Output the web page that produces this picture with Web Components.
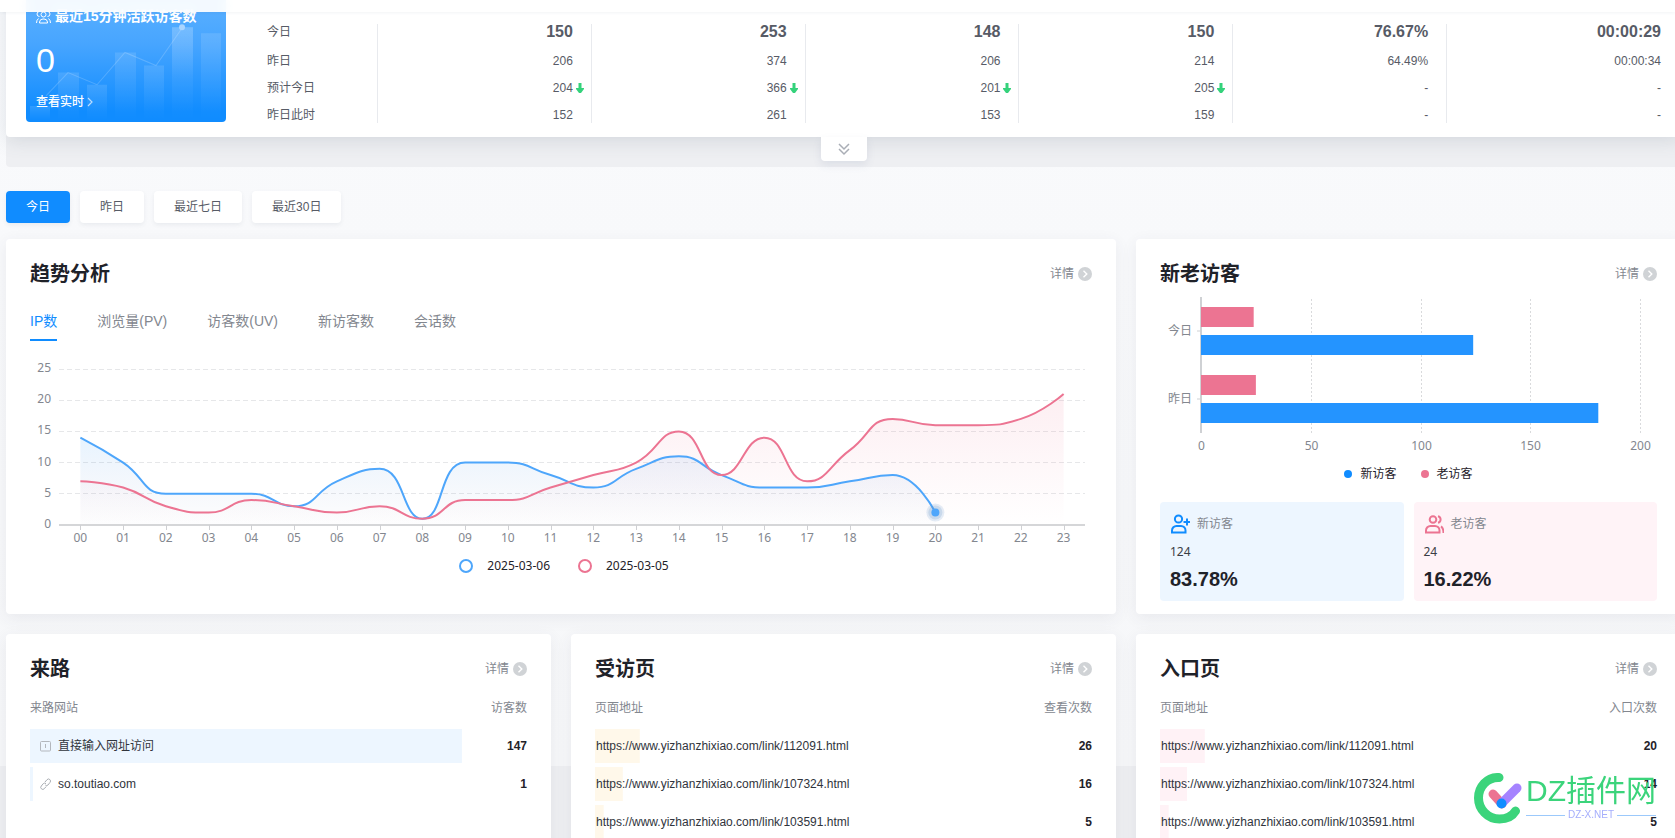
<!DOCTYPE html>
<html lang="zh-CN">
<head>
<meta charset="utf-8">
<title>网站概况</title>
<style>
  :root {
    --blue: #108cff;
    --line-blue: #4ea6fb;
    --pink: #ec7492;
    --ink: #1f2229;
    --text: #575b66;
    --muted: #83878f;
    --rule: #e8eaee;
    --sans: "Liberation Sans", "Noto Sans CJK SC", sans-serif;
    --chart: "Noto Sans", "Noto Sans CJK SC", sans-serif;
  }
  html, body { height: 100%; }
  body {
    margin: 0;
    overflow: hidden;
    color: var(--text);
    font: 12px/20px var(--sans);
    background: linear-gradient(#f9fafc 0, #f6f7f9 calc(100vh - 72px), #eeeff2 calc(100vh - 72px));
  }
</style>
</head>
<body>
<dash-page></dash-page>
<site-watermark></site-watermark>

<script>
const define = (name, html, setup) => {
  const template = document.createElement('template');
  template.innerHTML = html;
  customElements.define(name, class extends HTMLElement {
    connectedCallback() {
      if (this.shadowRoot) return;
      this.attachShadow({ mode: 'open' }).append(template.content.cloneNode(true));
      if (setup) setup(this, this.shadowRoot);
    }
  });
};

define('top-bar', `
<style>
  :host { display: block; height: 12px; position: relative; z-index: 2; background: rgba(255,255,255,.93); backdrop-filter: blur(6px); box-shadow: 0 1px 3px rgba(40,60,100,.06); }
</style>`);

/* Active visitors tile */
define('active-tile', `
<style>
  :host { display: flex; flex-direction: column; box-sizing: border-box; width: 200px; padding: 14px 10px 10px; position: relative; overflow: hidden; color: #fff; border-radius: 4px; background: linear-gradient(#55adff 15%, #47a5ff 40%, #108cff 92%); }
  .art { position: absolute; inset: 0; width: 100%; height: 100%; }
  h2, strong, a { position: relative; }
  h2 { display: flex; align-items: center; gap: 4px; margin: 0; font-size: 14px; line-height: 20px; white-space: nowrap; }
  strong { font-size: 34px; line-height: 40px; font-weight: 400; margin: 14px 0 12px; }
  a { display: flex; align-items: center; gap: 2px; color: #fff; text-decoration: none; font-weight: 500; line-height: 20px; }
</style>
<svg class="art" viewBox="0 0 200 129" preserveAspectRatio="none" aria-hidden="true">
  <defs><linearGradient id="g" x1="0" y1="0" x2="0" y2="1"><stop offset="0" stop-color="#fff" stop-opacity=".12"/><stop offset="1" stop-color="#fff" stop-opacity="0"/></linearGradient></defs>
  <g fill="url(#g)">
    <path d="M4 113h20v14H4z"/><path d="M32 80h21v47H32z"/><path d="M61 92h20v35H61z"/><path d="M89 60h21v67H89z"/><path d="M118 73h20v54h-20z"/><path d="M146 35h21v92h-21z"/><path d="M146 35h21v50h-21z"/><path d="M175 41h20v86h-20z"/>
  </g>
  <path d="M20 103 42 80 71 92 99 60 130 73 156 36" fill="none" stroke="#fff" stroke-opacity=".18"/>
  <circle cx="156" cy="35" r="3" fill="#a9d5ff"/>
</svg>
<h2><svg width="15" height="15" viewBox="0 0 15 15" fill="none" stroke="#fff" stroke-width="1" aria-hidden="true"><circle cx="7.500" cy="5.500" r="2.500"/><path d="M3.500 2.500a2.500 2.500 0 0 0 0 5M11.500 2.500a2.500 2.500 0 0 1 0 5M3.500 14v-1a3.500 3.500 0 0 1 3.500-3h1a3.500 3.500 0 0 1 3.500 3v1zM2.500 9.500Q.5 11 .5 14M12.500 9.500q2 1.500 2 4.500"/></svg>最近15分钟活跃访客数</h2>
<strong>0</strong>
<a href="#realtime">查看实时<svg width="8" height="12" viewBox="0 0 8 12" fill="none" stroke="#b9dcff" stroke-width="1.2" aria-hidden="true"><path d="M2 2l4 4-4 4"/></svg></a>`);

/* Summary figures */
define('summary-table', `
<style>
  :host { display: block; flex: 1; margin-bottom: -1px; }
  table { width: 100%; table-layout: fixed; border-collapse: separate; border-spacing: 0; }
  th, td { padding: 0 18px 11px 0; border-right: 1px solid var(--rule); font-weight: 400; line-height: 16px; text-align: right; }
  th { width: 92px; text-align: left; }
  td:last-child { padding-right: 0; border-right: 0; }
  tr:first-child > * { padding-bottom: 13px; }
  tr:first-child td { font-size: 16px; font-weight: 700; }
  tr:last-child > * { padding-bottom: 0; }
  svg { margin: 0 -11px 0 3px; vertical-align: -1px; }
</style>
<table><tbody></tbody></table>`, (host, root) => {
  const rows = [
    ['今日', '150', '253', '148', '150', '76.67%', '00:00:29'],
    ['昨日', '206', '374', '206', '214', '64.49%', '00:00:34'],
    ['预计今日', '204', '366', '201', '205', '-', '-'],
    ['昨日此时', '152', '261', '153', '159', '-', '-']
  ];
  const arrow = '<svg width="8" height="10" viewBox="0 0 8 10" aria-label="下降"><path d="M2.500 0h3v5H8v1L5 10H3L0 6V5h2.500z" fill="#34d27b"/></svg>';
  root.querySelector('tbody').innerHTML = rows.map((r, i) =>
    `<tr><th scope="row">${r[0]}</th>${r.slice(1).map(v => `<td>${v}${i === 2 && v !== '-' ? arrow : ''}</td>`).join('')}</tr>`).join('');
});

define('summary-panel', `
<style>
  :host { display: block; margin-top: -20px; background: #eeeff2; border-radius: 0 0 4px 4px; }
  .card { display: flex; gap: 41px; align-items: flex-end; padding: 0 20px 15px; background: #fff; border-radius: 4px; box-shadow: 0 4px 18px rgba(90,105,125,.17); }
  .strip { display: flex; justify-content: center; align-items: flex-start; height: 30px; }
  button { position: relative; width: 46px; height: 24px; padding: 0; border: 0; border-radius: 0 0 4px 4px; background: #fff; box-shadow: 0 4px 8px rgba(90,105,150,.12); }
  svg { display: block; margin: auto; }
</style>
<section class="card"><active-tile></active-tile><summary-table></summary-table></section>
<div class="strip"><button aria-label="展开"><svg width="12" height="14" viewBox="0 0 12 14" fill="none" stroke="#aaaeb6" stroke-width="1.500"><path d="M1 2l5 5 5-5M1 7l5 5 5-5"/></svg></button></div>`);

/* Date range buttons */
define('range-picker', `
<style>
  :host { display: flex; gap: 10px; margin: 24px 0 16px; }
  button { height: 32px; padding: 0 20px; border: 0; border-radius: 4px; background: #fff; color: var(--text); font: 12px/20px var(--sans); box-shadow: 0 2px 4px rgba(60,75,100,.08); }
  button[aria-pressed="true"] { background: var(--blue); color: #fff; }
</style>
<button aria-pressed="true">今日</button><button>昨日</button><button>最近七日</button><button>最近30日</button>`);

/* Card with a title, a details link and a slot */
define('dash-card', `
<style>
  :host { display: block; padding: 21px 24px 13px; border-radius: 4px; background: #fff; box-shadow: 0 4px 16px rgba(60,70,90,.08); }
  header { display: flex; justify-content: space-between; align-items: center; }
  h2 { margin: 0; color: var(--ink); font-size: 20px; line-height: 28px; font-weight: 700; }
  a { display: flex; align-items: center; gap: 4px; color: var(--muted); text-decoration: none; }
</style>
<header><h2></h2><a href="#details">详情<svg width="14" height="14" viewBox="0 0 14 14" aria-hidden="true"><circle cx="7" cy="7" r="7" fill="#d0d3d6"/><path d="M5.500 3.800 8.800 7l-3.300 3.200" fill="none" stroke="#fff" stroke-width="1.400"/></svg></a></header>
<slot></slot>`, (host, root) => { root.querySelector('h2').textContent = host.getAttribute('heading'); });

define('metric-tabs', `
<style>
  :host { display: flex; gap: 40px; margin-top: 19px; }
  button { padding: 0 0 4px; border: 0; border-bottom: 2px solid transparent; background: none; color: var(--muted); font: 14px/28px var(--sans); }
  button[aria-selected="true"] { color: var(--blue); border-color: var(--blue); }
</style>
<button role="tab" aria-selected="true">IP数</button><button role="tab">浏览量(PV)</button><button role="tab">访客数(UV)</button><button role="tab">新访客数</button><button role="tab">会话数</button>`,
  host => host.setAttribute('role', 'tablist'));

/* Smooth line through points; control points stay inside each segment's bounds */
const smoothPath = (pts, s = 0.5) => {
  const clamp = (v, a, b) => Math.max(Math.min(a, b), Math.min(Math.max(a, b), v));
  let out = `M${pts[0]}`, cp0 = pts[0];
  for (let i = 1; i < pts.length; i++) {
    const p = pts[i], prev = pts[i - 1], next = pts[i + 1];
    let cp1 = p, n0 = p;
    if (next) {
      const lp = Math.hypot(p[0] - prev[0], p[1] - prev[1]);
      const ln = Math.hypot(next[0] - p[0], next[1] - p[1]);
      const r = ln / (ln + lp), v = [next[0] - prev[0], next[1] - prev[1]];
      n0 = [0, 1].map(k => clamp(p[k] + v[k] * s * r, p[k], next[k]));
      cp1 = [0, 1].map(k => clamp(p[k] - (n0[k] - p[k]) * lp / ln, prev[k], p[k]));
      n0 = [0, 1].map(k => clamp(p[k] + (p[k] - cp1[k]) * ln / lp, p[k], next[k]));
    }
    out += `C${cp0} ${cp1} ${p}`;
    cp0 = n0;
  }
  return out;
};

const chartStyle = `
  :host { display: block; }
  svg { display: block; width: 100%; overflow: visible; }
  text { font: 12px var(--chart); fill: var(--muted); }
  .legend { display: flex; justify-content: center; color: var(--ink); font: 12px/20px var(--chart); }
  .legend span { display: flex; align-items: center; }`;

define('trend-chart', `
<style>${chartStyle}
  svg { height: 205px; }
  .legend { gap: 28px; margin: 10px 0 25px; padding-left: 6px; }
  .legend span { gap: 14px; }
  i { box-sizing: border-box; width: 14px; height: 14px; border: 2px solid var(--line-blue); border-radius: 50%; }
  i.old { border-color: var(--pink); }
</style>
<svg role="img" aria-label="IP数趋势"></svg>
<div class="legend"><span><i></i>2025-03-06</span><span><i class="old"></i>2025-03-05</span></div>`, (host, root) => {
  const svg = root.querySelector('svg');
  const today = [14,10,5,5,5,3,7,9,1,10,10,8,6,9,11,8,6,6,7,8,2];
  const before = [7,6,3,2,4,3,2,3,1,4,4,6,8,10,15,8,14,7,12,17,16,16,17,21];
  const draw = () => {
    const left = 29, right = svg.clientWidth - 7, step = (right - left) / 24, base = 184;
    const X = i => left + step * (i + .5), Y = v => base - v * 6.24;
    let h = `<defs>
      <linearGradient id="b" x1="0" y1="0" x2="0" y2="1"><stop offset="0" stop-color="#108cff" stop-opacity=".1"/><stop offset="1" stop-color="#5060a0" stop-opacity=".01"/></linearGradient>
      <linearGradient id="p" x1="0" y1="0" x2="0" y2="1"><stop offset="0" stop-color="#ec7492" stop-opacity=".12"/><stop offset="1" stop-color="#ec7492" stop-opacity="0"/></linearGradient></defs>`;
    for (let v = 0; v <= 25; v += 5) {
      const y = Math.floor(Y(v)) + .5;
      if (v) h += `<path d="M${left} ${y}H${right}" stroke="#e6e7e9" stroke-dasharray="5 3"/>`;
      h += `<text x="21" y="${Math.round(Y(v)) + 3}" text-anchor="end">${v}</text>`;
    }
    const area = (d, c, n) => `<path d="${smoothPath(d.map((v, i) => [X(i), Y(v)]))}L${X(n)} ${base}L${X(0)} ${base}Z" fill="url(#${c})"/>`;
    const line = (d, c) => `<path d="${smoothPath(d.map((v, i) => [X(i), Y(v)]))}" fill="none" stroke="${c}" stroke-width="2"/>`;
    h += area(before, 'p', 23) + area(today, 'b', 20) + line(today, '#4ea6fb') + line(before, '#ec7492');
    h += `<path d="M${left} ${base}H${right}" stroke="#d5d6d8" stroke-width="2"/>`;
    before.forEach((_, i) => {
      h += `<path d="M${Math.round(X(i)) + .5} ${base}v5" stroke="#cfd0d3"/><text x="${X(i)}" y="201" text-anchor="middle">${String(i).padStart(2, '0')}</text>`;
    });
    h += `<circle cx="${X(20)}" cy="${Y(2)}" r="9" fill="#5b8fc8" fill-opacity=".16"/><circle cx="${X(20)}" cy="${Y(2)}" r="7" fill="#5b8fc8" fill-opacity=".2"/><circle cx="${X(20)}" cy="${Y(2)}" r="4" fill="#4ea6fb"/>`;
    svg.innerHTML = h;
  };
  draw();
  new ResizeObserver(draw).observe(svg);
});

define('visitor-chart', `
<style>${chartStyle}
  svg { height: 171px; }
  .legend { gap: 24px; margin: 5px 0 18px; }
  .legend span { gap: 8px; }
  i { width: 8px; height: 8px; border-radius: 50%; background: var(--blue); }
  i.old { background: var(--pink); }
</style>
<svg role="img" aria-label="新老访客对比"></svg>
<div class="legend"><span><i></i>新访客</span><span><i class="old"></i>老访客</span></div>`, (host, root) => {
  const svg = root.querySelector('svg');
  const draw = () => {
    const left = 41, right = svg.clientWidth - 17, k = (right - left) / 200;
    let h = '';
    for (let v = 0; v <= 200; v += 50) {
      const x = Math.round(left + v * k) + .5;
      if (v) h += `<path d="M${x} 11V145" stroke="#d9dadc" stroke-dasharray="2 2"/>`;
      h += `<text x="${x}" y="162" text-anchor="middle">${v}</text>`;
    }
    h += `<path d="M${left} 9V145" stroke="#cfd1d4" stroke-width="2"/>`;
    [['今日', 24, 124, 9], ['昨日', 25, 181, 77]].forEach(([name, old, fresh, y]) => {
      h += `<path d="M${left - 4} ${y + 34}h4" stroke="#cfd1d4"/><text x="${left - 9}" y="${y + 38}" text-anchor="end">${name}</text>`;
      h += `<rect x="${left}" y="${y + 10}" width="${old * k}" height="20" fill="#ec7492"/><rect x="${left}" y="${y + 38}" width="${fresh * k}" height="20" fill="#2494ff"/>`;
    });
    svg.innerHTML = h;
  };
  draw();
  new ResizeObserver(draw).observe(svg);
});

define('visitor-share', `
<style>
  :host { display: block; flex: 1; box-sizing: border-box; padding: 12px 10px 10px; border-radius: 4px; background: var(--tint); }
  .name { display: flex; align-items: center; gap: 7px; color: var(--muted); }
  .count { margin: 8px 0 5px; color: #3a3d45; font-family: var(--chart); }
  strong { display: block; color: var(--ink); font-size: 20px; line-height: 24px; }
</style>
<div class="name"><slot name="icon"></slot><slot></slot></div>
<div class="count"></div><strong></strong>`, (host, root) => {
  root.querySelector('.count').textContent = host.getAttribute('count');
  root.querySelector('strong').textContent = host.getAttribute('share');
});

/* Ranking table with share bars behind the names */
define('rank-table', `
<style>
  :host { display: block; margin-top: 4px; }
  table { width: 100%; table-layout: fixed; border-collapse: separate; border-spacing: 0 4px; }
  th, td { height: 34px; padding: 0; text-align: left; }
  th { color: var(--muted); font-weight: 400; }
  th:last-child, td:last-child { width: 62px; text-align: right; }
  td { color: #30343c; }
  td:first-child { background: linear-gradient(var(--bar), var(--bar)) no-repeat 0 0 / var(--share) 100%; }
  td:last-child { color: var(--ink); font-weight: 700; }
  a { display: flex; align-items: center; gap: 7px; color: inherit; text-decoration: none; padding-left: 1px; }
  a:has(svg) { padding-left: 10px; }
</style>
<table><thead></thead><tbody></tbody></table>`, (host, root) => {
  const icons = {
    box: '<svg width="11" height="12" viewBox="0 0 11 12" fill="none" stroke="#b3b7bd" aria-hidden="true"><rect x=".5" y="1.500" width="10" height="9.500" rx="1"/><path d="M5.500 4v4"/></svg>',
    link: '<svg width="11" height="12" viewBox="0 0 11 12" fill="none" stroke="#a9adb3" aria-hidden="true"><path d="M5 4l2-2.300a2 2 0 0 1 3 2.700L8 7Q6.700 8.200 5.300 7M6.200 8.500 4.300 10.700a2 2 0 0 1-3-2.700L3.300 5.600Q4.600 4.500 6 5.600"/></svg>'
  };
  const [a, b] = host.getAttribute('columns').split(',');
  root.querySelector('thead').innerHTML = `<tr><th scope="col">${a}</th><th scope="col">${b}</th></tr>`;
  root.querySelector('tbody').innerHTML = JSON.parse(host.getAttribute('rows')).map(([name, n, share, icon]) =>
    `<tr><td style="--share:${share}%"><a href="#page">${icons[icon] || ''}<span>${name}</span></a></td><td>${n}</td></tr>`).join('');
});

define('dash-page', `
<style>
  :host { display: block; }
  main { width: 100%; margin-left: 6px; }
  .grid { display: grid; grid-template-columns: repeat(3, minmax(0, 1fr)); gap: 20px; }
  .wide { grid-column: span 2; }
  .shares { display: flex; gap: 10px; }
  .new { --tint: #edf6ff; }
  .old { --tint: #fff3f7; }
</style>
<top-bar></top-bar>
<main>
  <summary-panel></summary-panel>
  <range-picker></range-picker>
  <div class="grid">
    <dash-card class="wide" heading="趋势分析"><metric-tabs></metric-tabs><trend-chart></trend-chart></dash-card>
    <dash-card heading="新老访客">
      <visitor-chart></visitor-chart>
      <div class="shares">
        <visitor-share class="new" count="124" share="83.78%"><svg slot="icon" width="20" height="20" viewBox="0 0 20 20" fill="none" stroke="#108cff" stroke-width="2" aria-hidden="true"><circle cx="8.500" cy="5" r="3.600"/><path d="M2 18.500v-2a4.500 4.500 0 0 1 4.500-4.500h4.500a4.500 4.500 0 0 1 4.500 4.500v2zM17 4.500v7M13.500 8h6.500"/></svg>新访客</visitor-share>
        <visitor-share class="old" count="24" share="16.22%"><svg slot="icon" width="20" height="20" viewBox="0 0 20 20" fill="none" stroke="#ec7492" stroke-width="2" aria-hidden="true"><circle cx="9" cy="5.500" r="3.300"/><path d="M2 18.500v-2a4.500 4.500 0 0 1 4.500-4.500h4.500a4.500 4.500 0 0 1 4.500 4.500v2zM14 2.200a3.400 3.400 0 0 1 0 6.600M17 12.300q2.500 1.700 2.500 6.700"/></svg>老访客</visitor-share>
      </div>
    </dash-card>
    <dash-card heading="来路"><rank-table style="--bar:#edf6ff" columns="来路网站,访客数" rows='[["直接输入网址访问",147,99.3,"box"],["so.toutiao.com",1,0.7,"link"]]'></rank-table></dash-card>
    <dash-card heading="受访页"><rank-table style="--bar:#fff8ea" columns="页面地址,查看次数" rows='[["https://www.yizhanzhixiao.com/link/112091.html",26,10.3],["https://www.yizhanzhixiao.com/link/107324.html",16,6.4],["https://www.yizhanzhixiao.com/link/103591.html",5,2]]'></rank-table></dash-card>
    <dash-card heading="入口页"><rank-table style="--bar:#fff2f6" columns="页面地址,入口次数" rows='[["https://www.yizhanzhixiao.com/link/112091.html",20,10.3],["https://www.yizhanzhixiao.com/link/107324.html",14,6.3],["https://www.yizhanzhixiao.com/link/103591.html",5,2]]'></rank-table></dash-card>
  </div>
</main>`);

/* Site logo pinned over the lower right corner */
define('site-watermark', `
<style>
  :host { position: fixed; right: 19px; bottom: 13px; display: flex; gap: 4px; pointer-events: none; }
  .name { color: #3bd47b; font-size: 30px; line-height: 36px; white-space: nowrap; font-weight: 400; }
  .site { display: flex; align-items: center; gap: 3px; color: #a5aefc; font-size: 10px; line-height: 12px; }
  .site::before, .site::after { content: ""; flex: 1; height: 1px; background: #9cc9fb; }
</style>
<svg width="48" height="52" viewBox="0 0 48 52" fill="none" stroke-linecap="round" aria-hidden="true">
  <path d="M25 4.500C13 4 4.500 14 4.500 25c0 11 9 21 21 21 7 0 13-3 16-8" stroke="#3bd47b" stroke-width="9"/>
  <path d="M19 21l9 10" stroke="#ec7492" stroke-width="9"/>
  <path d="M43 15 28 30" stroke="#a583ff" stroke-width="9"/>
  <circle cx="27.500" cy="30.500" r="5" fill="#108cff"/>
</svg>
<div><div class="name">DZ插件网</div><div class="site">DZ-X.NET</div></div>`);
</script>
</body>
</html>
